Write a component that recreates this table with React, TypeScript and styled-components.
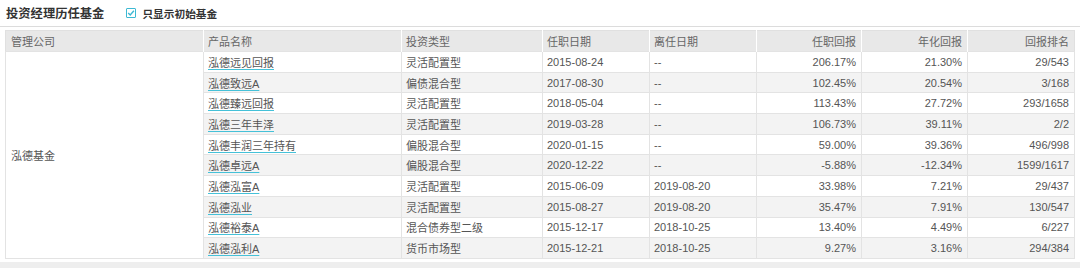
import styled, { createGlobalStyle } from "styled-components";

const GlobalStyle = createGlobalStyle`
    html, body {
        margin: 0;
        padding: 0;
        background: #fff;
    }
    body {
        font-family: "Liberation Sans", "Noto Sans CJK SC", sans-serif;
        color: #555;
    }
`;

const Page = styled.div`
    width: 1080px;
    height: 268px;
    overflow: hidden;
`;

const Header = styled.div`
    display: flex;
    align-items: center;
    height: 27px;
    padding-left: 6px;
    border-bottom: 1px solid #dcdcdc;
    box-sizing: border-box;
`;

const Title = styled.div`
    font-family: "Noto Sans CJK SC", sans-serif;
    font-size: 12.3px;
    font-weight: 700;
    color: #333;
    margin-right: 22px;
`;

const Check = styled.span`
    display: inline-flex;
    align-items: center;
    justify-content: center;
    width: 10px;
    height: 10px;
    border: 1px solid #3db9d3;
    box-sizing: border-box;
    border-radius: 1px;
    margin-right: 6px;
`;

const Label = styled.label`
    display: flex;
    align-items: center;
    font-family: "Noto Sans CJK SC", sans-serif;
    font-size: 10.7px;
    font-weight: 700;
    color: #333;
`;

const Wrap = styled.div`
    padding: 3px 6px 0 5px;
`;

const Table = styled.table`
    width: 100%;
    border-collapse: collapse;
    table-layout: fixed;
    font-size: 11px;
    border: 1px solid #e0e0e0;
`;

const Th = styled.th<{ $right?: boolean; $w: number }>`
    width: ${(p) => p.$w}px;
    height: 21px;
    padding: 0 ${(p) => (p.$right ? "5px" : "4px")} 0 4px;
    background: #e8e8e8;
    border-left: 1px solid #fff;
    text-align: ${(p) => (p.$right ? "right" : "left")};
    font-family: "Noto Sans CJK SC", sans-serif;
    font-weight: 400;
    color: #666;
    box-sizing: border-box;
    &:first-child {
        border-left: none;
        padding-left: 5px;
    }
`;

const Tr = styled.tr<{ $alt: boolean }>`
    height: 20.7px;
    background: ${(p) => (p.$alt ? "#f3f3f3" : "#fff")};
`;

const Td = styled.td<{ $right?: boolean }>`
    padding: 0 ${(p) => (p.$right ? "5px" : "4px")} 0 4px;
    border: 1px solid #e3e3e3;
    text-align: ${(p) => (p.$right ? "right" : "left")};
    white-space: nowrap;
    color: #555;
    font-family: "Liberation Sans", "Noto Sans CJK SC", sans-serif;
`;

const CompanyCell = styled.td`
    background: #fff;
    border: 1px solid #e3e3e3;
    padding: 0 5px;
    font-family: "Noto Sans CJK SC", sans-serif;
    color: #555;
`;

const FundLink = styled.a`
    color: #555;
    text-decoration: underline;
    text-decoration-color: #45c1d8;
    text-decoration-thickness: 1.2px;
    text-underline-offset: 2px;
    font-family: "Liberation Sans", "Noto Sans CJK SC", sans-serif;
    cursor: pointer;
`;

const Track = styled.div`
    height: 7px;
    margin-top: 3px;
    background: #eeeeee;
`;

type Fund = [string, string, string, string, string, string, string];

const funds: Fund[] = [
    ["泓德远见回报", "灵活配置型", "2015-08-24", "--", "206.17%", "21.30%", "29/543"],
    ["泓德致远A", "偏债混合型", "2017-08-30", "--", "102.45%", "20.54%", "3/168"],
    ["泓德臻远回报", "灵活配置型", "2018-05-04", "--", "113.43%", "27.72%", "293/1658"],
    ["泓德三年丰泽", "灵活配置型", "2019-03-28", "--", "106.73%", "39.11%", "2/2"],
    ["泓德丰润三年持有", "偏股混合型", "2020-01-15", "--", "59.00%", "39.36%", "496/998"],
    ["泓德卓远A", "偏股混合型", "2020-12-22", "--", "-5.88%", "-12.34%", "1599/1617"],
    ["泓德泓富A", "灵活配置型", "2015-06-09", "2019-08-20", "33.98%", "7.21%", "29/437"],
    ["泓德泓业", "灵活配置型", "2015-08-27", "2019-08-20", "35.47%", "7.91%", "130/547"],
    ["泓德裕泰A", "混合债券型二级", "2015-12-17", "2018-10-25", "13.40%", "4.49%", "6/227"],
    ["泓德泓利A", "货币市场型", "2015-12-21", "2018-10-25", "9.27%", "3.16%", "294/384"],
];

const columns: { title: string; w: number; right?: boolean }[] = [
    { title: "管理公司", w: 198 },
    { title: "产品名称", w: 198 },
    { title: "投资类型", w: 141 },
    { title: "任职日期", w: 107 },
    { title: "离任日期", w: 107 },
    { title: "任职回报", w: 105, right: true },
    { title: "年化回报", w: 106, right: true },
    { title: "回报排名", w: 107, right: true },
];

export default function App() {
    return (
        <Page>
            <GlobalStyle />
            <Header>
                <Title>投资经理历任基金</Title>
                <Label>
                    <Check>
                        <svg width="8" height="8" viewBox="0 0 8 8">
                            <path d="M1.2 4.1 L3.2 6 L6.9 1.8" fill="none" stroke="#3db9d3" strokeWidth="1.4" />
                        </svg>
                    </Check>
                    只显示初始基金
                </Label>
            </Header>
            <Wrap>
                <Table>
                    <thead>
                        <tr>
                            {columns.map((c) => (
                                <Th key={c.title} $w={c.w} $right={c.right}>{c.title}</Th>
                            ))}
                        </tr>
                    </thead>
                    <tbody>
                        {funds.map((f, i) => (
                            <Tr key={f[0]} $alt={i % 2 === 1}>
                                {i === 0 && <CompanyCell rowSpan={funds.length}>泓德基金</CompanyCell>}
                                <Td><FundLink>{f[0]}</FundLink></Td>
                                <Td>{f[1]}</Td>
                                <Td>{f[2]}</Td>
                                <Td>{f[3]}</Td>
                                <Td $right>{f[4]}</Td>
                                <Td $right>{f[5]}</Td>
                                <Td $right>{f[6]}</Td>
                            </Tr>
                        ))}
                    </tbody>
                </Table>
            </Wrap>
            <Track />
        </Page>
    );
}
